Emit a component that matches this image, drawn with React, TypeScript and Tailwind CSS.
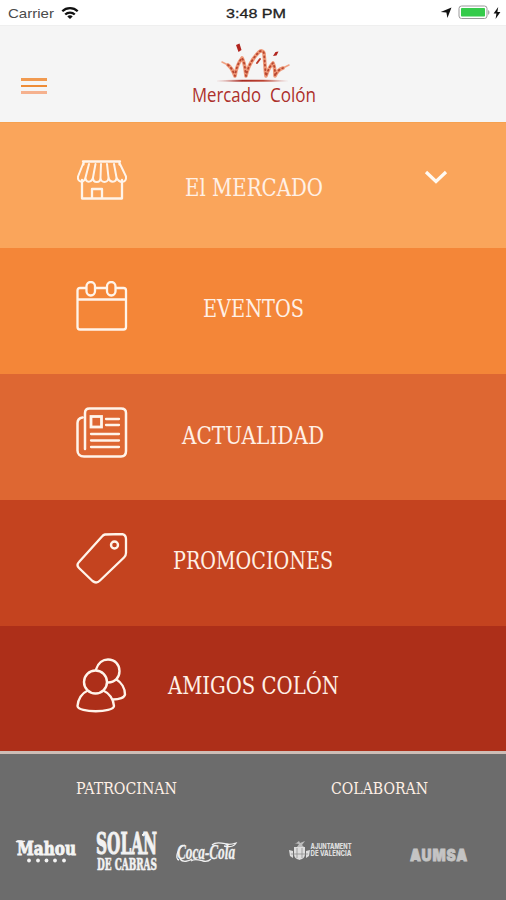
import type { ReactNode } from "react";

type LabelProps = {
  text: string;
  width: number;
  size: number;
  className: string;
};

const Label = ({ text, width, size, className }: LabelProps) => {
  return (
    <svg
      width={width}
      height="30"
      className={"shrink-0 overflow-visible " + className}
      fontFamily="'DejaVu Serif', serif"
      fontSize={size}
    >
      <text x="0" y="22.5" textLength={width} lengthAdjust="spacingAndGlyphs" fill="#fff0e6">
        {text}
      </text>
    </svg>
  );
};

const Icon = ({ children, className }: { children: ReactNode; className: string }) => {
  return (
    <svg
      width="52"
      height="56"
      viewBox="0 0 52 56"
      fill="none"
      stroke="#fff4ea"
      strokeWidth="2.3"
      strokeLinecap="round"
      strokeLinejoin="round"
      className={"ml-[76px] shrink-0 " + className}
    >
      {children}
    </svg>
  );
};

const StatusBar = () => {
  return (
    <div className="flex h-[25px] items-center bg-white font-['Liberation_Sans',sans-serif]">
      <div className="flex w-[226px] items-center pl-2">
        <svg width="47" height="18">
          <text x="0" y="14" fontSize="13.5" textLength="46" lengthAdjust="spacingAndGlyphs" fill="#4a4a4a">
            Carrier
          </text>
        </svg>
        <svg width="18" height="14" viewBox="0 0 18 14" className="ml-[6px]" fill="none" stroke="#111" strokeWidth="2.3">
          <path d="M1.3 5.2c4.3-4.2 11.1-4.2 15.4 0M4.2 8.5c2.7-2.6 6.9-2.6 9.6 0" />
          <path d="M6.3 10.4c1.5-1.4 3.9-1.4 5.4 0L9 13z" fill="#111" stroke="none" />
        </svg>
      </div>
      <svg width="62" height="18">
        <text x="0" y="14" fontSize="13.5" textLength="60" lengthAdjust="spacingAndGlyphs" fill="#222" stroke="#222" strokeWidth="0.3">
          3:48 PM
        </text>
      </svg>
      <div className="ml-auto flex items-center pr-[5px]">
        <svg width="12" height="12" viewBox="0 0 12 12">
          <path d="M11.5.5L7.4 11 6.4 5.6.7 5z" fill="#111" />
        </svg>
        <svg width="32" height="15" viewBox="0 0 32 15" className="ml-[6px]">
          <rect x="1" y="1" width="28" height="12.5" rx="2.5" fill="#fff" stroke="#999" />
          <rect x="3" y="3" width="24" height="8.5" rx="0.8" fill="#35cb4b" />
          <path d="M30 5c2 .8 2 4 0 4.8" fill="#aaa" />
        </svg>
        <svg width="8" height="12" viewBox="0 0 8 12" className="ml-[3px]">
          <path d="M5.2 0L.6 6.6h2.8L2.6 12l4.8-7H4.4z" fill="#111" />
        </svg>
      </div>
    </div>
  );
};

const MarketLogo = () => {
  return (
    <svg width="128" height="68" viewBox="0 0 128 68" className="ml-[145px] mt-[13px] overflow-visible">
      <defs>
        <linearGradient id="line">
          <stop offset="0" stopColor="#b8392d" stopOpacity="0.1" />
          <stop offset="0.35" stopColor="#a72a22" />
          <stop offset="0.65" stopColor="#bd4433" />
          <stop offset="1" stopColor="#b8392d" stopOpacity="0.05" />
        </linearGradient>
      </defs>
      <g fill="none" strokeLinecap="round" strokeLinejoin="round">
        <path d="M30 23l6 3M91 29l6-3" stroke="#f0a283" strokeWidth="1.6" />
        <path
          d="M36 26c3 2 5 6 7 11 1-7 3-13 7-18 3 5 3 11 4 18 2-10 7-18 13-24 2-2 5-1 5 2 1 8 1 16 2 22 2-6 4-10 7-13 2 4 2 8 2 13 2-5 5-7 8-8"
          stroke="#ee9878"
          strokeWidth="3.6"
        />
        <path
          d="M36 26c3 2 5 6 7 11 1-7 3-13 7-18 3 5 3 11 4 18 2-10 7-18 13-24 2-2 5-1 5 2 1 8 1 16 2 22 2-6 4-10 7-13 2 4 2 8 2 13 2-5 5-7 8-8"
          stroke="#b74630"
          strokeWidth="1.8"
          strokeDasharray="1 3.2"
        />
        <path d="M65 24l3-4" stroke="#ba3828" strokeWidth="2" />
      </g>
      <path d="M44 6l3.5-1.5 2 6.5-3 2zM81 17l2.500-4 3-.5-2 4z" fill="#b1241e" />
      <path d="M25 42c22-1.500 50-1.500 71 0-21 .7-49 .7-71 0z" fill="url(#line)" stroke="url(#line)" strokeWidth="0.4" />
      <g fontFamily="'Open Sans', sans-serif" fontSize="19.5" fill="#ad302b">
        <text x="0" y="63" textLength="69" lengthAdjust="spacingAndGlyphs">
          Mercado
        </text>
        <text x="78" y="63" textLength="46" lengthAdjust="spacingAndGlyphs">
          Colón
        </text>
      </g>
    </svg>
  );
};

const Header = () => {
  return (
    <header className="flex h-[97px] border-t border-[#efefef] bg-[#f5f5f5]">
      <button className="ml-[21px] mt-[52px] flex h-4 w-[26px] flex-col gap-1" aria-label="Menú">
        <span className="h-[2.5px] w-full shrink-0 bg-[#f19a50]" />
        <span className="h-[2.5px] w-full shrink-0 bg-[#ee8c36]" />
        <span className="h-[3px] w-full shrink-0 bg-[#f5b18e]" />
      </button>
      <MarketLogo />
    </header>
  );
};

const Menu = () => {
  return (
    <nav>
      <div className="flex h-[126px] border-t border-[#f6a14f] bg-[#faa55b]">
        <Icon className="mt-[37px]">
          <path d="M7 1.500h37M7.500 1.500v3M43.500 1.500v3M6 20v18.500h40V20M16 38.500V29h10v9.500" />
          <path
            d="M7 4L2 16.500c-1 6 6 7 7.500 1L13 4M13 4l-3.500 13.500c0 5.500 6 5.500 7.500 0L19.500 4M19.500 4L17 17.500c0 6 7.500 6 7.500 0L25 4M25 4l-.5 13.500c0 6 8 6 8 0L31 4M31 4l1.500 13.500c1 5.500 8 5.500 8 0L38 4M44 4l6 12.500c1 7-7 7-9.500 1"
            strokeWidth="2"
          />
        </Icon>
        <Label text="El MERCADO" width={138} size={24} className="ml-[57px] mt-[50px]" />
        <svg width="24" height="16" viewBox="0 0 24 16" className="ml-[101px] mt-[46px]" fill="none" stroke="#fffaf3" strokeWidth="3.2">
          <path d="M2 3l10 9.500L22 3" />
        </svg>
      </div>

      <div className="flex h-[126px] bg-[#f48638]">
        <Icon className="mt-[33px]">
          <path d="M10 7H4c-1.500 0-2.500 1-2.500 2.500V46c0 1.500 1 2.500 2.500 2.500h43.500c1.500 0 2.500-1 2.500-2.500V9.500C50 8 49 7 47.500 7H40M19.500 7H30M1.500 18.500H50" />
          <rect x="10.500" y="1" width="8.500" height="13.500" rx="4.2" />
          <rect x="31" y="1" width="8.500" height="13.500" rx="4.2" />
        </Icon>
        <Label text="EVENTOS" width={101} size={23.5} className="ml-[75px] mt-[46px]" />
      </div>

      <div className="flex h-[126px] bg-[#de6732]">
        <Icon className="mt-[33px]">
          <path d="M9 42V6c0-3 1.500-4.500 4.500-4.500H45c3 0 5 1.500 5 4.500v38c0 3.500-2 5.500-5 5.500H8c-4 0-6.500-2.500-6.500-6V16c0-3 2-5 5-5.500" strokeWidth="2.5" />
          <rect x="15" y="9.500" width="10.500" height="10.500" strokeWidth="2.8" strokeLinejoin="miter" />
          <path d="M30 12h13M30 18h13M15 27h28M15 33.500h28M15 40h28" />
        </Icon>
        <Label text="ACTUALIDAD" width={142} size={24} className="ml-[54px] mt-[47px]" />
      </div>

      <div className="flex h-[126px] bg-[#c4431f]">
        <Icon className="mt-[33px]">
          <path d="M29 1.500l16-.5c3 0 5 2 5 5V20c0 2-.5 3-2 4.500L24 47.500c-2.500 2.500-5 2.500-7.500.5L3 35c-2-2-2-4 0-6L26 3.500c1-1.200 1.500-1.700 3-2z" />
          <circle cx="38.500" cy="12" r="3.500" strokeWidth="2.4" />
        </Icon>
        <Label text="PROMOCIONES" width={160} size={24} className="ml-[45px] mt-[46px]" />
      </div>

      <div className="flex h-[125px] bg-[#ad2f19]">
        <Icon className="mt-[32px]">
          <circle cx="19.500" cy="24" r="11.500" strokeWidth="2.4" />
          <path d="M11 33c-5 2-9 8-9.500 15 .5 7 36 7 36.500 0-.5-7-5-13-10-15" strokeWidth="2.4" />
          <path d="M20 11.500C22 5 27 1.500 32 1.500c7 0 11.500 5 11.500 11.500S39 24.500 32 24.500M40.500 21.500c5 3 8.500 9 8.500 15-.5 3-5.500 5-12 5" strokeWidth="2.4" />
        </Icon>
        <Label text="AMIGOS COLÓN" width={171} size={23.5} className="ml-[40px] mt-[45px]" />
      </div>
    </nav>
  );
};

const Footer = () => {
  return (
    <footer className="h-[149px] border-t-[3px] border-[#cdbdb6] bg-[#6c6c6c]">
      <div className="flex">
        <Label text="PATROCINAN" width={101} size={17.5} className="ml-[76px] mt-[17px]" />
        <Label text="COLABORAN" width={97} size={17.5} className="ml-[154px] mt-[17px]" />
      </div>

      <div className="mt-[29px] flex items-start">
        <svg width="61" height="28" viewBox="0 0 61 28" className="ml-4 mt-[9px] overflow-visible" fill="#f4f4f4">
          <text x="1" y="15.5" fontFamily="'DejaVu Serif', serif" fontWeight="bold" fontSize="18" textLength="59" lengthAdjust="spacingAndGlyphs" stroke="#f4f4f4" strokeWidth="0.9">
            Mahou
          </text>
          <path d="M0 3c3-3 6 1 9-1" stroke="#f4f4f4" strokeWidth="1.5" fill="none" />
          {[13, 22, 30.5, 39, 48].map((x) => (
            <circle key={x} cx={x} cy="21.5" r="1.9" />
          ))}
        </svg>

        <svg width="62" height="40" viewBox="0 0 62 40" className="ml-[19px] mt-px overflow-visible" fill="#f2f2f2" stroke="#f2f2f2" fontFamily="'DejaVu Serif', serif" fontWeight="bold">
          <text x="0" y="12.3" fontSize="16" textLength="61" lengthAdjust="spacingAndGlyphs" strokeWidth="0.6" transform="scale(1 1.85)">
            SOLAN
          </text>
          <path d="M46 4l3-3-1 4z" />
          <text x="1" y="24.2" fontSize="10.2" textLength="60" lengthAdjust="spacingAndGlyphs" strokeWidth="0.4" transform="scale(1 1.6)">
            DE CABRAS
          </text>
        </svg>

        <svg width="62" height="24" viewBox="0 0 62 24" className="ml-[18px] mt-[11px] overflow-visible" fill="#f1f1f1" stroke="#f1f1f1">
          <text
            x="1"
            y="18"
            fontFamily="'Liberation Serif', serif"
            fontStyle="italic"
            fontWeight="bold"
            fontSize="20"
            textLength="58"
            lengthAdjust="spacingAndGlyphs"
            strokeWidth="0.3"
          >
            Coca-Cola
          </text>
          <path d="M4 18c3 4 9 2 12 0M15 20c4-3 8-1 12 0 4 1 6 0 8-2M36 4c4-4 10-2 14-1 4 1 7 0 10-1-2 4-8 4-12 3M9 4C2 6-2 18 3 19" fill="none" strokeWidth="1.3" />
        </svg>

        <svg width="64" height="24" viewBox="0 0 64 24" className="ml-[51px] mt-[9px] overflow-visible" fill="#dedede">
          <path d="M4 4c4 1 4-1 6-2l1 2 5-2-3 4 2 2H8l2-3z" opacity="0.7" />
          <path d="M5 8h11v7c0 4-3 5-5.5 6C8 20 5 19 5 15zM0 11l4 1v7l-3-2zM17 12l4-1-1 6-3 2z" />
          <path d="M8 9v10M13 9v10M2 15h17" stroke="#888" strokeWidth="0.7" />
          <g fontFamily="Inter, sans-serif" fontWeight="800" fontSize="7.3">
            <text x="21.5" y="9.5" textLength="41" lengthAdjust="spacingAndGlyphs">
              AJUNTAMENT
            </text>
            <text x="21.5" y="17" textLength="41" lengthAdjust="spacingAndGlyphs">
              DE VALÈNCIA
            </text>
          </g>
        </svg>

        <svg width="61" height="20" viewBox="0 0 61 20" className="ml-[56px] mt-[15px] overflow-visible" fill="#c4c4c4">
          <text x="1" y="15.5" fontFamily="Inter, sans-serif" fontWeight="900" fontSize="15.5" textLength="58" lengthAdjust="spacingAndGlyphs" letterSpacing="1" stroke="#c4c4c4" strokeWidth="0.8">
            AUMSA
          </text>
          <path d="M7 6l4.500 9h-9zM53 6l4.500 9h-9z" />
        </svg>
      </div>
    </footer>
  );
};

const App = () => {
  return (
    <main className="h-[900px] w-[506px] overflow-hidden">
      <StatusBar />
      <Header />
      <Menu />
      <Footer />
    </main>
  );
};

export default App;
